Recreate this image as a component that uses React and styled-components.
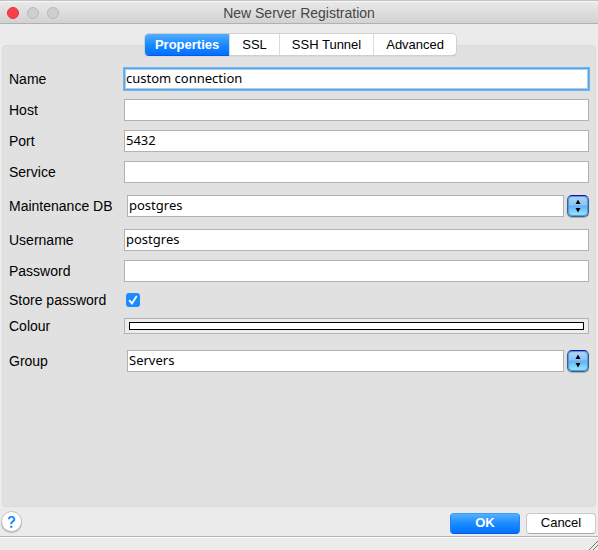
import React from "react";
import styled, { createGlobalStyle, css } from "styled-components";

const GlobalStyle = createGlobalStyle`
  * { box-sizing: border-box; }
  body {
    margin: 0;
    background: #ebebeb;
    font: 14px/16px "Liberation Sans", Arial, sans-serif;
    color: #000;
  }
  button, input, select { margin: 0; font: inherit; color: inherit; outline: none; }
`;

const Window = styled.div`
  display: flex;
  flex-direction: column;
  min-height: 100vh;
  background: #ebebeb;
  border-top: 1px solid #c4c4c4;
`;

const TitleBar = styled.header`
  display: grid;
  grid-template-columns: 1fr auto 1fr;
  align-items: center;
  height: 23px;
  padding: 0 7px;
  border-top: 1px solid #f6f6f6;
  border-bottom: 1px solid #b1b1b1;
  border-radius: 4px 4px 0 0;
  background: linear-gradient(#e9e9e9, #d2d2d2);
`;

const Lights = styled.div`
  display: flex;
  gap: 8px;
`;

const Light = styled.button`
  width: 12px;
  height: 12px;
  padding: 0;
  border-radius: 50%;
  border: 1px solid ${(p) => (p.$close ? "#e2333b" : "#b9b9b9")};
  background: ${(p) => (p.$close ? "#fc4048" : "#cfcfcf")};
`;

const Title = styled.h1`
  margin: 0;
  font-size: 14px;
  line-height: 18px;
  font-weight: 400;
  color: #464646;
`;

const Tabs = styled.div`
  z-index: 1;
  display: flex;
  align-self: center;
  height: 21px;
  margin: 10px 0 -10px 3px;
  border-radius: 4px;
  background: #fff;
  box-shadow: 0 0 0 1px #d0d0d0, 0 1px 1px #9c9c9c;
`;

const Tab = styled.button`
  padding: 0 ${(p) => p.$pad || 12}px;
  border: 0;
  border-left: 1px solid #dcdcdc;
  background: transparent;
  font-size: 13px;
  line-height: 20px;
  ${(p) =>
    p.$active &&
    css`
      border-left: 0;
      border-radius: 4px 0 0 4px;
      background: linear-gradient(#53aeff, #1a8bff 50%, #0070ff);
      box-shadow: 0 1px 0 #0a55f0;
      color: #fff;
      font-weight: 700;
    `}
`;

const Panel = styled.form`
  display: flex;
  flex: 1;
  flex-direction: column;
  gap: 9px;
  margin: 0 2px;
  padding: 22px 6px 12px;
  border: 1px solid #dadada;
  border-radius: 4px;
  background: #e1e1e1;
`;

const Row = styled.div`
  display: grid;
  grid-template-columns: 115px minmax(0, 1fr);
  align-items: center;
  min-height: ${(p) => p.$height || 22}px;
  margin-bottom: ${(p) => p.$after || 0}px;
`;

const Label = styled.label`
  white-space: nowrap;
`;

const fieldLook = css`
  width: 100%;
  height: 22px;
  border: 1px solid #b2b2b2;
  border-radius: 0;
  background: #fff;
  font-family: "Noto Sans", "Open Sans", sans-serif;
  font-size: 13px;
  line-height: 18px;
`;

const Field = styled.input`
  ${fieldLook}
  padding: 0 1px 2px;
  ${(p) =>
    p.$focused &&
    css`
      border-color: #5aa5e2;
      box-shadow: inset 0 0 0 1px #a5d0f5, 0 0 0 1px #74b5ee;
    `}
`;

const Combo = styled.div`
  display: grid;
  grid-template-columns: minmax(0, 1fr) 22px;
  gap: 3px;
  padding-left: 3px;
`;

const Select = styled.select`
  ${fieldLook}
  appearance: none;
  padding: 0 1px 2px;
`;

const Stepper = styled.button`
  display: grid;
  place-items: center;
  height: 22px;
  padding: 0;
  border: 1px solid #35618f;
  border-top-color: #15188c;
  border-radius: 5px;
  background: linear-gradient(#b4d6f7, #8cc4f5 45%, #62b2f3 50%, #9feaff);
  box-shadow: inset 0 0 1px 1px #4a98e0, 0 1px 1px #aaa;
`;

const Check = styled.input`
  appearance: none;
  width: 14px;
  height: 14px;
  margin-left: 2px;
  border-radius: 3px;
  background: #1a8cff;
`;

const CheckWrap = styled.div`
  display: grid;
  align-items: center;
  justify-items: start;
  > * { grid-area: 1 / 1; }
  svg { margin-left: 2px; pointer-events: none; }
`;

const Colour = styled.input`
  appearance: none;
  width: 100%;
  height: 16px;
  padding: 0;
  border: 1px solid #b2b2b2;
  background: #ededed;
  &::-webkit-color-swatch-wrapper { padding: 3px 4px; }
  &::-webkit-color-swatch { border: 1px solid #000; border-radius: 0; }
`;

const Footer = styled.footer`
  display: flex;
  align-items: center;
  gap: 6px;
  height: 29px;
  padding: 3px 2px 0 1px;
`;

const Help = styled.button`
  width: 21px;
  height: 21px;
  margin: 0 auto 3px 0;
  padding: 0;
  border: 1px solid #c3c3c3;
  border-radius: 50%;
  background: #fff;
  box-shadow: 0 1px 1px #b5b5b5;
  color: #0a84ff;
  font-size: 16px;
  font-weight: 500;
  line-height: 18px;
  font-family: Inter, sans-serif;
`;

const Action = styled.button`
  width: 70px;
  height: 21px;
  padding: 0;
  border: 1px solid #c9c9c9;
  border-bottom-color: #acacac;
  border-radius: 4px;
  background: #fff;
  font-size: 13px;
  line-height: 18px;
  ${(p) =>
    p.$primary &&
    css`
      border-color: #3d9bf8 #2083f6 #0a55ee;
      background: linear-gradient(#55b0ff, #1a8bff 50%, #0072ff);
      color: #fff;
      font-weight: 700;
    `}
`;

const StatusBar = styled.div`
  display: flex;
  justify-content: flex-end;
  align-items: flex-end;
  height: 14px;
  border-top: 1px solid #b4b4b4;
  box-shadow: inset 0 1px 0 #fff;
`;

function Entry({ id, label, ...rest }) {
  return (
    <Row>
      <Label htmlFor={id}>{label}</Label>
      <Field id={id} {...rest} />
    </Row>
  );
}

function ComboEntry({ id, label, value }) {
  return (
    <Row $height={28}>
      <Label htmlFor={id}>{label}</Label>
      <Combo>
        <Select id={id} defaultValue={value}>
          <option>{value}</option>
        </Select>
        <Stepper type="button" aria-label={`Choose ${label}`}>
          <svg width="6" height="14" viewBox="0 0 6 14">
            <path d="M3 0.5 5.5 5H.5zM3 13.5 5.5 9H.5z" />
          </svg>
        </Stepper>
      </Combo>
    </Row>
  );
}

export default function App() {
  return (
    <Window>
      <GlobalStyle />
      <TitleBar>
        <Lights>
          <Light $close aria-label="Close" />
          <Light aria-label="Minimise" />
          <Light aria-label="Zoom" />
        </Lights>
        <Title>New Server Registration</Title>
      </TitleBar>
      <Tabs role="tablist">
        <Tab role="tab" aria-selected="true" $active $pad={10}>Properties</Tab>
        <Tab role="tab">SSL</Tab>
        <Tab role="tab">SSH Tunnel</Tab>
        <Tab role="tab">Advanced</Tab>
      </Tabs>
      <Panel id="server">
        <Entry id="name" label="Name" defaultValue="custom connection" $focused />
        <Entry id="host" label="Host" />
        <Entry id="port" label="Port" defaultValue="5432" />
        <Entry id="service" label="Service" />
        <ComboEntry id="db" label="Maintenance DB" value="postgres" />
        <Entry id="username" label="Username" defaultValue="postgres" />
        <Entry id="password" label="Password" type="password" />
        <Row $height={18}>
          <Label htmlFor="store">Store password</Label>
          <CheckWrap>
            <Check id="store" type="checkbox" defaultChecked />
            <svg width="14" height="14" viewBox="0 0 14 14" fill="none" stroke="#fff" strokeWidth="1.8" strokeLinecap="round">
              <path d="M3.6 7.6 6 10.4 10.4 3.6" />
            </svg>
          </CheckWrap>
        </Row>
        <Row $height={16} $after={4}>
          <Label htmlFor="colour">Colour</Label>
          <Colour id="colour" type="color" defaultValue="#ffffff" />
        </Row>
        <ComboEntry id="group" label="Group" value="Servers" />
      </Panel>
      <Footer>
        <Help type="button" aria-label="Help">?</Help>
        <Action type="submit" form="server" $primary>OK</Action>
        <Action type="button">Cancel</Action>
      </Footer>
      <StatusBar>
        <svg width="9" height="9" viewBox="0 0 9 9" stroke="#777" strokeWidth="1">
          <path d="M0 9 9 0M4 9 9 4" />
        </svg>
      </StatusBar>
    </Window>
  );
}
